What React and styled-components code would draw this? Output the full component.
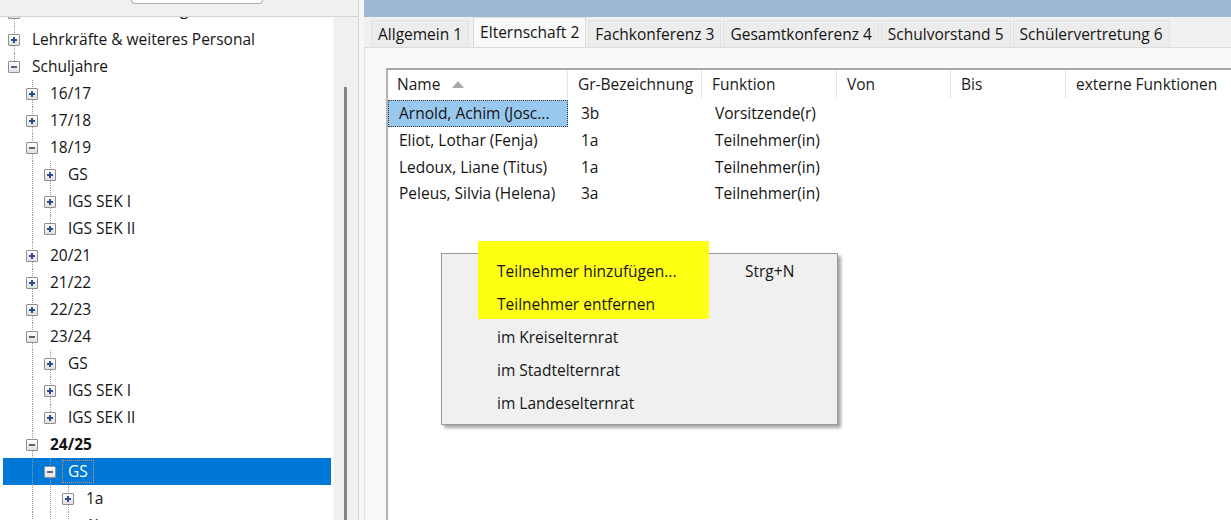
import React from 'react';
import styled, { createGlobalStyle, css } from 'styled-components';

const GlobalStyle = createGlobalStyle`
  html, body { margin: 0; padding: 0; background: #fff; }
  body {
    font-family: "Open Sans", "Noto Sans", sans-serif;
    font-size: 15.5px;
    color: #141414;
  }
  * { box-sizing: border-box; }
`;

const Window = styled.div`
  position: relative;
  display: flex;
  width: 1231px;
  height: 520px;
  overflow: hidden;
  background: #fff;
`;

/* ---------- left pane ---------- */
const LeftPane = styled.div`
  width: 359px;
  flex: none;
  display: flex;
  flex-direction: column;
  border-right: 1px solid #d6d6d6;
`;

const TopStrip = styled.div`
  height: 17px;
  flex: none;
  background: #f0f0f0;
  border-bottom: 1px solid #d4d4d4;
`;

const ToolButton = styled.div`
  margin-left: 131px;
  width: 132px;
  height: 4px;
  background: #fdfdfd;
  border: 1px solid #adadad;
  border-top: none;
  border-radius: 0 0 4px 4px;
`;

const TreeArea = styled.div`
  flex: 1;
  display: flex;
  min-height: 0;
`;

const TreeView = styled.div`
  width: 333px;
  flex: none;
  background: #fff;
  overflow: hidden;
  padding: 0 2px 0 3px;
`;

const TreeList = styled.div`
  margin-top: -18px;
`;

const TreeRow = styled.div`
  display: flex;
  align-items: center;
  height: 27px;
  padding-left: 2px;
  background: ${p => (p.$selected ? '#0078d7' : 'transparent')};
  color: ${p => (p.$selected ? '#fff' : '#141414')};
`;

const dotted = css`
  content: '';
  position: absolute;
  left: 9px;
  width: 0;
  border-left: 1px dotted #9a9a9a;
`;

const Guide = styled.div`
  position: relative;
  width: 18px;
  align-self: stretch;
  flex: none;
  &::before {
    ${dotted};
    top: 0;
    bottom: 0;
    display: ${p => (p.$line ? 'block' : 'none')};
  }
`;

const ExpanderCell = styled.div`
  position: relative;
  width: 18px;
  align-self: stretch;
  flex: none;
  display: flex;
  align-items: center;
  &::before {
    ${dotted};
    top: 0;
    height: ${p => (p.$next ? '100%' : '50%')};
  }
`;

const ExpanderBox = styled.div`
  position: relative;
  z-index: 1;
  margin-left: 3px;
  width: 12px;
  height: 12px;
  border: 1px solid #8f8f8f;
  border-radius: 1px;
  background: linear-gradient(#ffffff, #e1e1e1);
  &::before {
    content: '';
    position: absolute;
    left: 2px;
    top: 4px;
    width: 6px;
    height: 2px;
    background: ${p => (p.$open ? '#55667f' : '#2e4d8f')};
  }
  &::after {
    content: '';
    position: absolute;
    left: 4px;
    top: 2px;
    width: 2px;
    height: 6px;
    background: #2e4d8f;
    display: ${p => (p.$open ? 'none' : 'block')};
  }
`;

const TreeLabel = styled.span`
  margin-left: 4px;
  padding: 0 5px;
  line-height: 21px;
  white-space: nowrap;
  font-weight: ${p => (p.$bold ? 700 : 400)};
  outline: ${p => (p.$focus ? '1px dotted #e8954a' : 'none')};
  ${p => p.$clipped && css`transform: translateY(-3px);`}
`;

const Scrollbar = styled.div`
  width: 25px;
  flex: none;
  background: #f0f0f0;
  display: flex;
  flex-direction: column;
  border-left: 1px solid #f7f7f7;
`;

const Thumb = styled.div`
  margin: 70px 0 0 10px;
  width: 3px;
  flex: 1;
  background: #858585;
`;

const Splitter = styled.div`
  width: 5px;
  flex: none;
  background: #f6f6f6;
`;

/* ---------- right pane ---------- */
const RightPane = styled.div`
  flex: 1;
  display: flex;
  flex-direction: column;
  min-width: 0;
`;

const TitleBar = styled.div`
  height: 17px;
  flex: none;
  background: #9fb8d5;
`;

const TabStrip = styled.div`
  height: 30px;
  flex: none;
  display: flex;
  align-items: flex-end;
  padding-left: 7px;
  background: #f0f0f0;
`;

const Tab = styled.div`
  display: flex;
  align-items: center;
  white-space: nowrap;
  height: ${p => (p.$active ? '30px' : '27px')};
  padding: 0 ${p => (p.$active ? '6px' : '6px')};
  margin: 0 2px 0 0;
  background: ${p => (p.$active ? '#f9f9f9' : '#ececec')};
  border: 1px solid ${p => (p.$active ? '#dcdcdc' : '#e2e2e2')};
  border-bottom: none;
  position: relative;
  z-index: ${p => (p.$active ? 1 : 0)};
  ${p => p.$active && css`margin-left: 2px; padding-bottom: 2px;`}
`;

const TabPanel = styled.div`
  flex: 1;
  display: flex;
  flex-direction: column;
  background: #f9f9f9;
  border-top: 1px solid #dcdcdc;
  border-left: 1px solid #e4e4e4;
  padding: 20px 0 0 21px;
  min-height: 0;
`;

const ListView = styled.div`
  flex: 1;
  background: #fff;
  border-top: 2px solid #a9a9a9;
  border-left: 2px solid #b4b4b4;
`;

const HeaderRow = styled.div`
  display: flex;
  height: 30px;
  background: #fff;
`;

const HeaderCell = styled.div`
  display: flex;
  align-items: center;
  gap: 12px;
  width: ${p => p.$w}px;
  flex: none;
  padding-left: 10px;
  border-right: 1px solid #e5e5e5;
  margin-bottom: 2px;
  color: #1a1a1a;
  white-space: nowrap;
  ${p => p.$first && css`padding-left: 9px;`}
  ${p => p.$last && css`flex: 1; border-right: none;`}
`;

const DataRow = styled.div`
  display: flex;
  height: 26.7px;
  align-items: stretch;
`;

const DataCell = styled.div`
  display: flex;
  align-items: center;
  width: ${p => p.$w}px;
  flex: none;
  padding-left: 13px;
  white-space: nowrap;
  overflow: hidden;
  ${p => p.$first && css`padding-left: 0;`}
`;

const NameChip = styled.div`
  display: flex;
  align-items: center;
  width: 100%;
  height: 100%;
  padding-left: 11px;
  ${p => p.$selected && css`
    background: #99c8ef;
    outline: 1px dotted #3a3a3a;
    outline-offset: -1px;
  `}
`;

/* ---------- context menu ---------- */
const Menu = styled.div`
  position: absolute;
  left: 441px;
  top: 253px;
  width: 397px;
  height: 172px;
  background: #f0f0f0;
  border: 1px solid #979797;
  box-shadow: 3px 3px 3px rgba(0, 0, 0, 0.35);
  padding: 0;
  z-index: 10;
`;

const Marker = styled.div`
  position: absolute;
  left: 36px;
  top: -13px;
  width: 231px;
  height: 78px;
  background: #ffff14;
`;

const MenuItem = styled.div`
  position: relative;
  display: flex;
  align-items: center;
  height: 33px;
  padding-left: 55px;
  white-space: nowrap;
  color: #161616;
`;

const MenuLabel = styled.span`
  width: 248px;
`;

const Shortcut = styled.span``;

const SortArrow = () => (
  <svg width="12" height="7" viewBox="0 0 12 7" aria-hidden="true">
    <path d="M0 7 L6 0 L12 7 Z" fill="#a9a9a9" />
  </svg>
);

const tree = [
  { guides: [], open: false, next: true, label: 'Stammdaten und Organisation', clipped: true },
  { guides: [], open: false, next: true, label: 'Lehrkräfte & weiteres Personal' },
  { guides: [], open: true, next: false, label: 'Schuljahre' },
  { guides: [false], open: false, next: true, label: '16/17' },
  { guides: [false], open: false, next: true, label: '17/18' },
  { guides: [false], open: true, next: true, label: '18/19' },
  { guides: [false, true], open: false, next: true, label: 'GS' },
  { guides: [false, true], open: false, next: true, label: 'IGS SEK I' },
  { guides: [false, true], open: false, next: false, label: 'IGS SEK II' },
  { guides: [false], open: false, next: true, label: '20/21' },
  { guides: [false], open: false, next: true, label: '21/22' },
  { guides: [false], open: false, next: true, label: '22/23' },
  { guides: [false], open: true, next: true, label: '23/24' },
  { guides: [false, true], open: false, next: true, label: 'GS' },
  { guides: [false, true], open: false, next: true, label: 'IGS SEK I' },
  { guides: [false, true], open: false, next: false, label: 'IGS SEK II' },
  { guides: [false], open: true, next: true, label: '24/25', bold: true },
  { guides: [false, true], open: true, next: true, label: 'GS', selected: true },
  { guides: [false, true, true], open: false, next: true, label: '1a' },
  { guides: [false, true, true], open: false, next: true, label: '1b' },
];

const tabs = [
  'Allgemein 1',
  'Elternschaft 2',
  'Fachkonferenz 3',
  'Gesamtkonferenz 4',
  'Schulvorstand 5',
  'Schülervertretung 6',
];

const columns = [
  { key: 'name', title: 'Name', w: 180 },
  { key: 'gr', title: 'Gr-Bezeichnung', w: 134 },
  { key: 'fn', title: 'Funktion', w: 135 },
  { key: 'von', title: 'Von', w: 114 },
  { key: 'bis', title: 'Bis', w: 115 },
  { key: 'ext', title: 'externe Funktionen', w: 160 },
];

const rows = [
  { name: 'Arnold, Achim (Josc...', gr: '3b', fn: 'Vorsitzende(r)', selected: true },
  { name: 'Eliot, Lothar (Fenja)', gr: '1a', fn: 'Teilnehmer(in)' },
  { name: 'Ledoux, Liane (Titus)', gr: '1a', fn: 'Teilnehmer(in)' },
  { name: 'Peleus, Silvia (Helena)', gr: '3a', fn: 'Teilnehmer(in)' },
];

const menuItems = [
  { label: 'Teilnehmer hinzufügen...', shortcut: 'Strg+N' },
  { label: 'Teilnehmer entfernen' },
  { label: 'im Kreiselternrat' },
  { label: 'im Stadtelternrat' },
  { label: 'im Landeselternrat' },
];

export default function App() {
  return (
    <>
      <GlobalStyle />
      <Window>
        <LeftPane>
          <TopStrip>
            <ToolButton />
          </TopStrip>
          <TreeArea>
            <TreeView>
              <TreeList>
                {tree.map((n, i) => (
                  <TreeRow key={i} $selected={n.selected}>
                    {n.guides.map((g, j) => (
                      <Guide key={j} $line={g} />
                    ))}
                    <ExpanderCell $next={n.next}>
                      <ExpanderBox $open={n.open} />
                    </ExpanderCell>
                    <TreeLabel $bold={n.bold} $focus={n.selected} $clipped={n.clipped}>
                      {n.label}
                    </TreeLabel>
                  </TreeRow>
                ))}
              </TreeList>
            </TreeView>
            <Scrollbar>
              <Thumb />
            </Scrollbar>
          </TreeArea>
        </LeftPane>
        <Splitter />
        <RightPane>
          <TitleBar />
          <TabStrip>
            {tabs.map((t, i) => (
              <Tab key={t} $active={i === 1}>
                {t}
              </Tab>
            ))}
          </TabStrip>
          <TabPanel>
            <ListView>
              <HeaderRow>
                {columns.map((c, i) => (
                  <HeaderCell
                    key={c.key}
                    $w={c.w}
                    $first={i === 0}
                    $last={i === columns.length - 1}
                  >
                    {c.title}
                    {i === 0 && <SortArrow />}
                  </HeaderCell>
                ))}
              </HeaderRow>
              {rows.map((r, i) => (
                <DataRow key={i}>
                  <DataCell $w={180} $first>
                    <NameChip $selected={r.selected}>{r.name}</NameChip>
                  </DataCell>
                  <DataCell $w={134}>{r.gr}</DataCell>
                  <DataCell $w={135}>{r.fn}</DataCell>
                </DataRow>
              ))}
            </ListView>
          </TabPanel>
        </RightPane>
        <Menu>
          <Marker />
          {menuItems.map(m => (
            <MenuItem key={m.label}>
              <MenuLabel>{m.label}</MenuLabel>
              {m.shortcut && <Shortcut>{m.shortcut}</Shortcut>}
            </MenuItem>
          ))}
        </Menu>
      </Window>
    </>
  );
}
